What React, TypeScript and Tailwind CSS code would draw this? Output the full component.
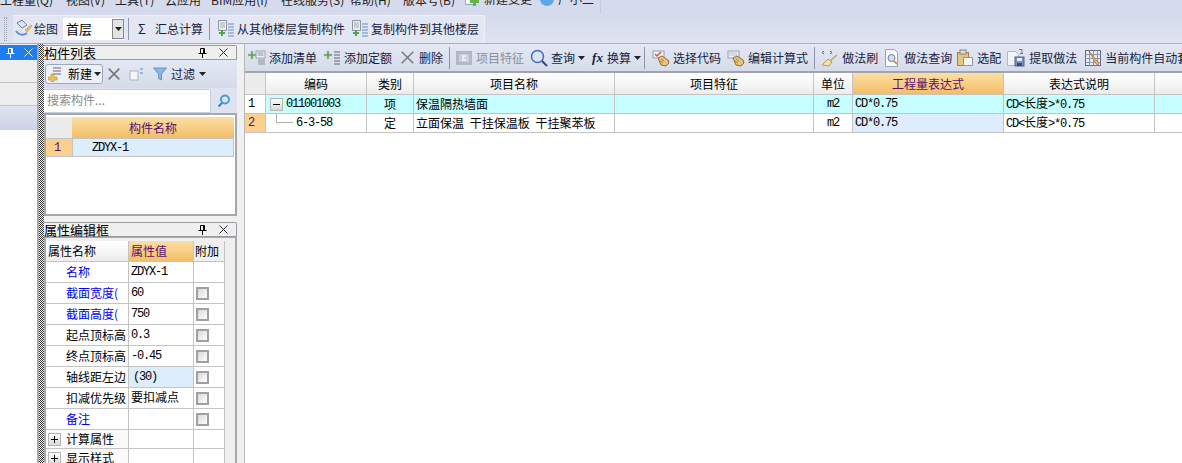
import type { ReactNode } from "react";

const CJK = "font-['Noto_Sans_CJK_SC','Liberation_Sans',sans-serif]";
// half-width digits in the original are 6px wide
const MONO = "font-['Liberation_Mono','Noto_Sans_CJK_SC',monospace] text-[12px] tracking-[-1.2px]";

const MENU = [
  { label: "工程量(Q)", w: "w-[66px]" },
  { label: "视图(V)", w: "w-[49px]" },
  { label: "工具(T)", w: "w-[50px]" },
  { label: "云应用", w: "w-[46px]" },
  { label: "BIM应用(I)", w: "w-[70px]" },
  { label: "在线服务(S)", w: "w-[69px]" },
  { label: "帮助(H)", w: "w-[53px]" },
  { label: "版本号(B)", w: "w-[61px]" },
];

const COLS = [
  { label: "编码", w: "w-[101px]" },
  { label: "类别", w: "w-[47px]" },
  { label: "项目名称", w: "w-[201px]" },
  { label: "项目特征", w: "w-[199px]" },
  { label: "单位", w: "w-[39px]" },
];

function Sep() {
  return <div className="h-[22px] w-px shrink-0 bg-[#8e95a8]" />;
}

function Pin({ color = "#000" }: { color?: string }) {
  return (
    <svg width="9" height="10" viewBox="0 0 9 10" fill="none" stroke={color} strokeWidth="1">
      <path d="M2.5 .5h4v5h-4zM5.500 1v4M.5 5.500h8M4.500 6v4" />
    </svg>
  );
}

function Cross({ color = "#333", size = 9, width = 1 }: { color?: string; size?: number; width?: number }) {
  return (
    <svg width={size} height={size} viewBox="0 0 9 9" fill="none" stroke={color} strokeWidth={width} className="shrink-0">
      <path d="M.5.5l8 8M8.5.5l-8 8" />
    </svg>
  );
}

function Caret() {
  return (
    <svg width="7" height="4" viewBox="0 0 7 4" className="shrink-0">
      <path d="M0 0h7L3.500 4z" fill="#222" />
    </svg>
  );
}

function GreenPlus({ x = 0, y = 0 }: { x?: number; y?: number }) {
  return <path transform={`translate(${x} ${y})`} d="M3 0h2v3h3v2H5v3H3V5H0V3h3z" fill="#6f9f68" stroke="#a9c9a2" strokeWidth=".5" />;
}

function AddListIcon() {
  return (
    <svg width="18" height="18" viewBox="0 0 18 18" className="shrink-0">
      <GreenPlus x={0} y={2} />
      <rect x="8" y="2" width="9" height="7" fill="#f2f3f7" stroke="#9aa0ac" />
      <path d="M9.500 4h6M9.500 6h6M10 11h7M10 13h7M10 15h7" stroke="#8a909c" />
    </svg>
  );
}

function AddQuotaIcon() {
  return (
    <svg width="18" height="18" viewBox="0 0 18 18" className="shrink-0">
      <GreenPlus x={1} y={2} />
      <path d="M11 3h6M11 6h6M11 9h6M11 12h6M11 15h6" stroke="#5f6572" />
    </svg>
  );
}

function CopyFloorIcon() {
  return (
    <svg width="18" height="20" viewBox="0 0 18 20" className="shrink-0">
      <path d="M1.500 1.500h8v10h-8z" fill="#e9ebf2" stroke="#8f95a3" />
      <path d="M3 4h5M3 6h5M3 8h5" stroke="#aab0bc" />
      <path d="M4 11h2v2h2v2H6v2H4v-2H2v-2h2z" fill="#4fa64a" />
      <path d="M11 5h6M11 8h6M11 11h6M11 14h6M11 17h6" stroke="#5f8fc8" />
    </svg>
  );
}

function DrawIcon() {
  return (
    <svg width="20" height="20" viewBox="0 0 20 20" className="shrink-0">
      <path d="M4 4l5-3 5 5-5 3z" fill="#dfe3ee" stroke="#6f7f9e" />
      <path d="M3 12c3 4 7 5 11 2" fill="none" stroke="#5a8ed0" strokeWidth="2" />
      <path d="M12 11l6-5 1 1-5 6z" fill="#e8c25a" stroke="#a88a30" strokeWidth=".5" />
    </svg>
  );
}

function HandIcon({ keyboard = false }: { keyboard?: boolean }) {
  return (
    <svg width="18" height="18" viewBox="0 0 18 18" className="shrink-0">
      <rect x="1" y="2" width="11" height="7" fill="#eef0f6" stroke="#9aa0ac" />
      {keyboard ? (
        <path d="M2.500 4h8M2.500 6h8" stroke="#8a909c" strokeDasharray="1 1" />
      ) : (
        <path d="M3 5l2 2 4-4" fill="none" stroke="#d8504a" strokeWidth="1.500" />
      )}
      <path d="M6 9l4-2 6 4 1 3-3 3-5-1z" fill="#e6c37e" stroke="#8f6d30" />
      <path d="M9 10l3 2M8 12l3 2" stroke="#a98440" />
    </svg>
  );
}

function BroomIcon() {
  return (
    <svg width="18" height="20" viewBox="0 0 18 20" className="shrink-0">
      <path d="M4 3L2 4.500 4 6M10 3l2 1.500L10 6" fill="none" stroke="#555d70" />
      <path d="M17 7l-7 6" stroke="#c9a24a" strokeWidth="1.500" />
      <path d="M8 11l4 3-3 4-7-1z" fill="#f2e4b0" stroke="#b69a50" />
    </svg>
  );
}

function DocSearchIcon() {
  return (
    <svg width="18" height="20" viewBox="0 0 18 20" className="shrink-0">
      <path d="M2.500 1.500h9l3 3v14h-12z" fill="#fafbfd" stroke="#9aa3b5" />
      <circle cx="8.500" cy="10" r="3.500" fill="#cfe0f2" stroke="#6c7f9e" />
      <path d="M11 13l3 3" stroke="#d09a40" strokeWidth="2" />
    </svg>
  );
}

function ClipboardIcon() {
  return (
    <svg width="18" height="20" viewBox="0 0 18 20" className="shrink-0">
      <path d="M1.500 4.500h11v13h-11z" fill="#e6c67c" stroke="#9c8040" />
      <rect x="4" y="2" width="6" height="4" fill="#d8dce6" stroke="#7f8694" />
      <path d="M7.500 9.500h9v8h-9z" fill="#f4f5f9" stroke="#8f95a3" />
    </svg>
  );
}

function FloppyIcon() {
  return (
    <svg width="20" height="20" viewBox="0 0 20 20" className="shrink-0">
      <path d="M1.500 3.500h8l3 3v11h-11z" fill="#f2f4fa" stroke="#aeb6c6" />
      <path d="M13 1.500h3M16 1.500v4M14 5.500h3" fill="none" stroke="#6d7890" />
      <rect x="9" y="9" width="9" height="9" fill="#7d90bd" stroke="#53628c" />
      <rect x="11" y="10" width="5" height="3" fill="#e8ecf5" />
      <rect x="11" y="15" width="5" height="3" fill="#3c4970" />
    </svg>
  );
}

function AutoIcon() {
  return (
    <svg width="18" height="20" viewBox="0 0 18 20" className="shrink-0">
      <rect x="1.500" y="2.500" width="15" height="15" fill="#e8ebf3" stroke="#5f6b86" />
      <path d="M1.500 6.500h15M1.500 10.500h15M1.500 14.500h15M5.500 2.500v15M9.500 2.500v15M13.500 2.500v15" stroke="#8d97b0" />
      <path d="M5 3l10 12-1 2-2-1z" fill="#e7b64e" stroke="#b04a3a" strokeWidth=".5" />
    </svg>
  );
}

function FeatureIcon() {
  return (
    <svg width="16" height="14" viewBox="0 0 16 14" className="shrink-0">
      <rect x="0" y="0" width="16" height="14" fill="#b3b8c4" />
      <rect x="3" y="3" width="10" height="8" fill="#cdd1db" />
      <path d="M10 5H7v4h3" fill="none" stroke="#f4f5f8" strokeWidth="1.500" />
    </svg>
  );
}

function Tool({ icon, label, muted = false, caret = false, cls = "gap-[3px]" }: { icon?: ReactNode; label: string; muted?: boolean; caret?: boolean; cls?: string }) {
  return (
    <div className={`flex shrink-0 items-center whitespace-nowrap text-[12px] ${muted ? "text-[#8a909c]" : "text-[#15233f]"} ${cls}`}>
      {icon}
      <span>{label}</span>
      {caret && <Caret />}
    </div>
  );
}

function PanelTitle({ title }: { title: string }) {
  return (
    <div className="flex h-[15px] items-center justify-between rounded-tr-[2px] border border-l-0 border-[#9a9ca3] bg-[#efefef] pr-[8px] text-[13px] leading-none text-black">
      <span>{title}</span>
      <div className="flex items-center gap-[12px]">
        <Pin />
        <Cross />
      </div>
    </div>
  );
}

function Check() {
  return <div className="h-[13px] w-[13px] border-2 border-[#a0a0a0] bg-gradient-to-br from-[#d9d9d9] to-white" />;
}

function Expander({ sign }: { sign: "+" | "-" }) {
  return (
    <div className="relative h-[13px] w-[13px] shrink-0 border border-[#b5b5b5] bg-gradient-to-b from-white to-[#d8d8d8]">
      <div className="absolute left-[2px] top-[5px] h-px w-[7px] bg-black" />
      {sign === "+" && <div className="absolute left-[5px] top-[2px] h-[7px] w-px bg-black" />}
    </div>
  );
}

const PROPS = [
  { name: "名称", value: "ZDYX-1", blue: true, check: false },
  { name: "截面宽度(", value: "60", blue: true, check: true },
  { name: "截面高度(", value: "750", blue: true, check: true },
  { name: "起点顶标高", value: "0.3", blue: false, check: true },
  { name: "终点顶标高", value: "-0.45", blue: false, check: true },
  { name: "轴线距左边", value: "(30)", blue: false, check: true, active: true },
  { name: "扣减优先级", value: "要扣减点", blue: false, check: true, cjk: true },
  { name: "备注", value: "", blue: true, check: true },
];

function PropertyTable() {
  return (
    <div className="w-[179px] text-[12px]">
      <div className="flex h-[21px] border-b border-[#c4c4c4]">
        <div className="flex w-[83px] items-center border-r border-[#c4c4c4] bg-gradient-to-b from-white to-[#ececec] pl-[2px]">属性名称</div>
        <div className="flex w-[65px] items-center border-r border-[#c4c4c4] bg-gradient-to-b from-[#fbdfa6] to-[#f3bd64] pl-[2px] text-[#5a0d6e]">属性值</div>
        <div className="flex w-[31px] items-center border-r border-[#c4c4c4] pl-[1px]">附加</div>
      </div>
      {PROPS.map((p) => (
        <div key={p.name} className="flex h-[21px] border-b border-[#c4c4c4] bg-white">
          <div className={`flex w-[83px] items-center overflow-hidden whitespace-nowrap border-r border-[#c4c4c4] pl-[20px] ${p.blue ? "text-[#0000f0]" : "text-black"}`}>{p.name}</div>
          <div className={`flex w-[65px] items-center border-r border-[#c4c4c4] pl-[2px] ${p.cjk ? "pb-[3px]" : MONO} ${p.active ? "bg-[#deedfc] pl-[4px]" : ""}`}>{p.value}</div>
          <div className="flex w-[31px] items-center border-r border-[#c4c4c4] pl-[2px]">{p.check && <Check />}</div>
        </div>
      ))}
      {["计算属性", "显示样式"].map((name) => (
        <div key={name} className="flex h-[19px] border-b border-[#c4c4c4] bg-white">
          <div className="flex w-[83px] items-center gap-[5px] border-r border-[#c4c4c4] bg-[#fbfbfb] pl-[2px]">
            <Expander sign="+" />
            {name}
          </div>
          <div className="w-[65px] border-r border-[#c4c4c4]" />
          <div className="w-[31px] border-r border-[#c4c4c4]" />
        </div>
      ))}
    </div>
  );
}

function HeaderCell({ label, w, accent = false }: { label: string; w: string; accent?: boolean }) {
  return (
    <div className={`flex ${w} shrink-0 items-center justify-center border-r border-[#c4c4c4] text-[12px] ${accent ? "bg-gradient-to-b from-[#fbdfa6] to-[#f3bd64] text-[#5a0d6e]" : "bg-gradient-to-b from-white to-[#ececec] text-black"}`}>
      {label}
    </div>
  );
}

function BodyCell({ children, w, cls = "" }: { children?: ReactNode; w: string; cls?: string }) {
  return <div className={`flex ${w} shrink-0 items-center whitespace-nowrap border-r border-[#c4c4c4] text-[12px] ${cls}`}>{children}</div>;
}

function Explain() {
  return (
    <>
      CD&lt;<span className={`text-[12px] tracking-normal ${CJK}`}>长度</span>&gt;*0.75
    </>
  );
}

export default function App() {
  return (
    <div className={`flex h-[463px] w-[1182px] flex-col overflow-hidden bg-[#f0f0f0] text-black ${CJK}`}>
      {/* menu bar, cut off by the top of the window */}
      <div className="flex h-[14px] shrink-0 items-end bg-[#d5dbec] text-[12px] leading-none text-[#222]">
        <div className="flex h-[14px] w-[601px] items-end overflow-hidden border-r border-[#c6cad8] pb-[8px]">
          {MENU.map((m) => (
            <span key={m.label} className={`${m.w} shrink-0 whitespace-nowrap`}>{m.label}</span>
          ))}
          <span className="flex shrink-0 items-center gap-[5px] whitespace-nowrap">
            <svg width="15" height="15" viewBox="0 0 15 15" className="shrink-0">
              <path d="M1.500 1.500h9v12h-9z" fill="#fff" stroke="#8ea6c8" />
              <path d="M9 6h3v3h3v3h-3v3H9v-3H6V9h3z" fill="#69b04f" />
            </svg>
            新建变更
          </span>
          <span className="ml-[8px] flex shrink-0 items-center gap-[4px] whitespace-nowrap">
            <span className="h-[14px] w-[14px] rounded-full bg-[#5aa8e6]" />
            广小二
          </span>
        </div>
      </div>

      {/* main toolbar */}
      <div className="flex h-[30px] shrink-0 items-center border-b border-[#aab0c2] bg-gradient-to-b from-[#d5dbec] to-[#dfe3f1] pl-[4px]">
        <div className="h-[24px] w-[3px] shrink-0 border-x border-dotted border-[#9aa1b3]" />
        <div className="ml-[6px] flex h-[28px] items-center border-r border-t border-[#eef0f8] bg-[#e3e6f3] pr-[5px]">
          <Tool icon={<DrawIcon />} label="绘图" cls="gap-[1px]" />
          <div className="ml-[5px] flex h-[22px] w-[61px] items-center justify-between bg-white pl-[3px] text-[13px]">
            首层
            <div className="flex h-[20px] w-[12px] items-center justify-center border border-[#888] bg-[#e4e4e4]">
              <Caret />
            </div>
          </div>
          <div className="ml-[4px]"><Sep /></div>
          <Tool icon={<span className="w-[10px] text-center text-[13px]">Σ</span>} label="汇总计算" cls="ml-[8px] gap-[8px]" />
          <div className="ml-[6px]"><Sep /></div>
          <Tool icon={<CopyFloorIcon />} label="从其他楼层复制构件" cls="ml-[7px] gap-[2px]" />
          <Tool icon={<CopyFloorIcon />} label="复制构件到其他楼层" cls="ml-[6px] gap-[2px]" />
        </div>
      </div>

      <div className="flex min-h-0 flex-1">
        {/* collapsed left dock */}
        <div className="flex w-[39px] shrink-0 flex-col border-r-2 border-[#a8a8a8] pt-[1px]">
          <div className="flex h-[15px] items-center justify-end gap-[9px] bg-[#1f7df2] pr-[4px]">
            <Pin color="#fff" />
            <Cross color="#fff" />
          </div>
          <div className="h-[23px] border-b border-[#c4c4c4] bg-[#eeeeee]" />
          <div className="h-[23px] border-b border-[#c4c4c4] bg-[#eeeeee]" />
          <div className="h-[24px] bg-gradient-to-b from-[#dfe4f0] to-[#ccd3e6]" />
          <div className="flex-1 bg-white" />
        </div>

        {/* splitter */}
        <div className="w-[5px] shrink-0 bg-[repeating-conic-gradient(#333_0_25%,#fff_0_50%)] bg-[length:2px_2px]" />

        {/* component list and property panels */}
        <div className="flex w-[193px] shrink-0 flex-col pt-[1px]">
          <PanelTitle title="构件列表" />
          <div className="flex h-[28px] items-center gap-[5px] bg-gradient-to-b from-[#e4e8f4] to-[#d6dbeb] pl-[1px]">
            <div className="flex h-[20px] w-[58px] shrink-0 items-center rounded-[3px] border border-[#9ea6ba] bg-[#eef0f7] pl-[2px] text-[12px]">
              <svg width="13" height="15" viewBox="0 0 13 15" className="shrink-0">
                <path d="M5 1h8M5 4h8M5 7h8" stroke="#667" />
                <path d="M3 7h3v3h3v3H6v2H3v-2H0v-3h3z" fill="#efc24a" stroke="#a88820" strokeWidth=".5" />
              </svg>
              <span className="ml-[7px] mr-[2px]">新建</span>
              <Caret />
            </div>
            <Cross color="#777" size={12} width={1.2} />
            <svg width="16" height="14" viewBox="0 0 16 14" className="ml-[4px] shrink-0">
              <rect x="1" y="4" width="8" height="9" fill="#f6f7fb" stroke="#aab1c0" />
              <path d="M11 2h3M11 6h3" stroke="#5b86c8" />
            </svg>
            <Tool
              icon={
                <svg width="14" height="14" viewBox="0 0 14 14" className="shrink-0">
                  <path d="M.5 1h13L8.500 7v6L5.500 11.500V7z" fill="#86b4e4" stroke="#6f95c3" />
                </svg>
              }
              label="过滤"
              caret
              cls="ml-[3px] gap-[4px]"
            />
          </div>
          <div className="flex h-[25px] items-center bg-[#dfe3f0]">
            <div className="flex h-[24px] w-[167px] items-center rounded-r-[2px] border border-l-0 border-[#c3d0e4] bg-white pb-px pl-[3px] text-[12px] text-[#8a8a8a]">搜索构件...</div>
            <svg width="14" height="14" viewBox="0 0 14 14" fill="none" className="ml-[6px] shrink-0">
              <circle cx="8" cy="5.500" r="4" stroke="#4a9ade" strokeWidth="2" />
              <path d="M5 9l-3.500 3.500" stroke="#3f7fc0" strokeWidth="2" />
            </svg>
          </div>
          <div className="h-[103px] border-2 border-[#a8a8a8] bg-white pr-px pt-[2px]">
            <div className="flex h-[21px]">
              <div className="w-[26px] bg-[#ececec]" />
              <div className="flex flex-1 items-center justify-center bg-gradient-to-b from-[#fbdfa6] to-[#f3bd64] text-[12px] text-[#5a0d6e]">构件名称</div>
            </div>
            <div className={`flex h-[19px] border-y border-[#c4c4c4] ${MONO}`}>
              <div className="flex w-[26px] items-center bg-[#fad08c] pl-[8px] text-[#5a0d6e]">1</div>
              <div className="flex flex-1 items-center border-x border-[#c4c4c4] bg-[#deedfc] pl-[19px]">ZDYX-1</div>
            </div>
          </div>
          <div className="h-[6px] shrink-0" />
          <PanelTitle title="属性编辑框" />
          <div className="min-h-0 flex-1 overflow-hidden border-x-2 border-t border-[#a8a8a8] bg-[#efefef] pt-[3px]">
            <PropertyTable />
          </div>
        </div>

        {/* gap between docks */}
        <div className="w-[8px] shrink-0 border-r border-[#b8b8b8] bg-[#f0f0f0]" />

        {/* bill of quantities */}
        <div className="flex min-w-0 flex-1 flex-col">
          <div className="flex h-[29px] shrink-0 items-center overflow-hidden border-b-2 border-[#a0a4ae] bg-gradient-to-b from-[#e4e8f4] to-[#d6dbeb] pl-[3px]">
            <Tool icon={<AddListIcon />} label="添加清单" />
            <Tool icon={<AddQuotaIcon />} label="添加定额" cls="ml-[6px] gap-[3px]" />
            <Tool icon={<Cross color="#777" size={13} width={1} />} label="删除" cls="ml-[9px] gap-[5px]" />
            <div className="ml-[6px]"><Sep /></div>
            <Tool icon={<FeatureIcon />} label="项目特征" muted cls="ml-[6px] gap-[4px]" />
            <Tool
              icon={
                <svg width="18" height="18" viewBox="0 0 18 18" fill="none" className="shrink-0">
                  <circle cx="7.500" cy="7.500" r="6" stroke="#3f6fc4" strokeWidth="1.500" />
                  <path d="M12 12l5 5" stroke="#3d3f8c" strokeWidth="2" />
                </svg>
              }
              label="查询"
              caret
              cls="ml-[6px] gap-[3px]"
            />
            <Tool icon={<span className="w-[12px] font-['Liberation_Serif',serif] text-[13px] font-bold italic">fx</span>} label="换算" caret cls="ml-[7px] gap-[3px]" />
            <div className="ml-[3px]"><Sep /></div>
            <Tool icon={<HandIcon />} label="选择代码" cls="ml-[7px] gap-[3px]" />
            <Tool icon={<HandIcon keyboard />} label="编辑计算式" cls="ml-[6px] gap-[3px]" />
            <div className="ml-[6px]"><Sep /></div>
            <Tool icon={<BroomIcon />} label="做法刷" cls="ml-[5px] gap-[4px]" />
            <Tool icon={<DocSearchIcon />} label="做法查询" cls="ml-[5px] gap-[3px]" />
            <Tool icon={<ClipboardIcon />} label="选配" cls="ml-[4px] gap-[3px]" />
            <Tool icon={<FloppyIcon />} label="提取做法" cls="ml-[5px] gap-[3px]" />
            <Tool icon={<AutoIcon />} label="当前构件自动套做法" cls="ml-[7px] gap-[3px]" />
          </div>

          <div className="min-h-0 flex-1 bg-white">
            <div className="flex h-[22px] border-b border-[#c4c4c4]">
              <div className="w-[21px] shrink-0 border-r border-[#c4c4c4] bg-[#ececec]" />
              {COLS.map((c) => (
                <HeaderCell key={c.label} label={c.label} w={c.w} />
              ))}
              <HeaderCell label="工程量表达式" w="w-[151px]" accent />
              <HeaderCell label="表达式说明" w="w-[151px]" />
              <div className="flex-1 bg-gradient-to-b from-white to-[#ececec]" />
            </div>

            <div className="flex h-[19px] border-b border-[#c4c4c4] bg-[#c6ffff]">
              <BodyCell w="w-[21px]" cls={`bg-white pl-[3px] ${MONO}`}>1</BodyCell>
              <BodyCell w="w-[101px]" cls="pl-[4px]">
                <Expander sign="-" />
                <span className={`ml-[3px] ${MONO}`}>011001003</span>
              </BodyCell>
              <BodyCell w="w-[47px]" cls="justify-center">项</BodyCell>
              <BodyCell w="w-[201px]" cls="pl-[2px]">保温隔热墙面</BodyCell>
              <BodyCell w="w-[199px]" />
              <BodyCell w="w-[39px]" cls={`justify-center ${MONO}`}>m2</BodyCell>
              <BodyCell w="w-[151px]" cls={`pl-[2px] ${MONO}`}>CD*0.75</BodyCell>
              <BodyCell w="w-[151px]" cls={`pl-[2px] ${MONO}`}><span><Explain /></span></BodyCell>
            </div>

            <div className="flex h-[19px] border-b border-[#c4c4c4]">
              <BodyCell w="w-[21px]" cls={`bg-[#fad08c] pl-[3px] text-[#5a0d6e] ${MONO}`}>2</BodyCell>
              <BodyCell w="w-[101px]" cls="relative pl-[30px]">
                <div className="absolute left-[10px] top-0 h-[9px] w-[17px] border-b border-l border-[#b0b0b0]" />
                <span className={MONO}>6-3-58</span>
              </BodyCell>
              <BodyCell w="w-[47px]" cls="justify-center">定</BodyCell>
              <BodyCell w="w-[201px]" cls="pl-[2px] [word-spacing:3px]">立面保温 干挂保温板 干挂聚苯板</BodyCell>
              <BodyCell w="w-[199px]" />
              <BodyCell w="w-[39px]" cls={`justify-center ${MONO}`}>m2</BodyCell>
              <BodyCell w="w-[151px]" cls={`bg-[#deedfc] pl-[2px] ${MONO}`}>CD*0.75</BodyCell>
              <BodyCell w="w-[151px]" cls={`pl-[2px] ${MONO}`}><span><Explain /></span></BodyCell>
            </div>
          </div>
        </div>
      </div>
    </div>
  );
}
